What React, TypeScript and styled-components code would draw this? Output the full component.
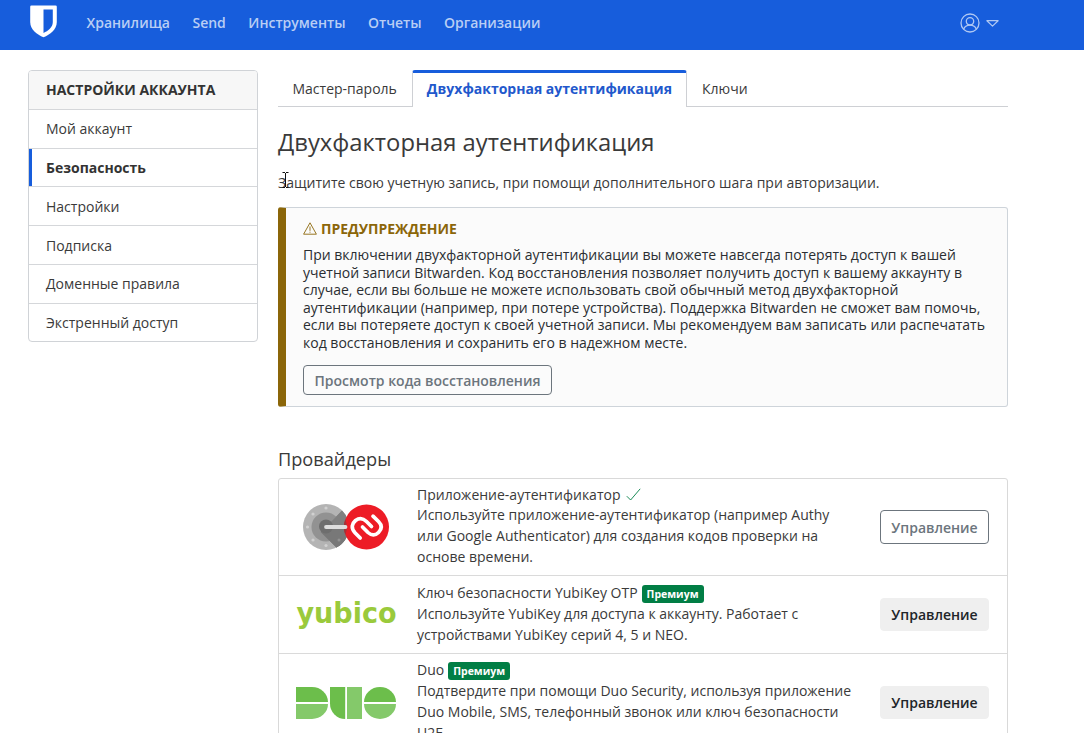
import React from "react";
import styled, { createGlobalStyle, css } from "styled-components";

const GlobalStyle = createGlobalStyle`
  *, *::before, *::after { box-sizing: border-box; }
  html, body { margin: 0; height: 733px; overflow: hidden; background: #fff; }
  body {
    font-family: "Open Sans", "Noto Sans", sans-serif;
    font-size: 14px;
    line-height: 21px;
    color: #3a3a3a;
  }
  h1, h2, h3, p, ul { margin: 0; padding: 0; font-weight: 400; }
  button { font-family: inherit; }
`;

const Navbar = styled.header`
  display: flex;
  align-items: center;
  height: 50px;
  padding: 0 85px 5px 30px;
  background: #175ddc;
`;

const Shield = styled.svg`
  display: block;
  width: 27px;
  height: 33px;
  margin-top: -2px;
`;

const Nav = styled.nav`
  display: flex;
  gap: 22.5px;
  margin-left: 29.5px;
  flex: 1;
`;

const NavLink = styled.a`
  color: #b9cef4;
  font-weight: 600;
  white-space: nowrap;
`;

const AccountMenu = styled.div`
  display: flex;
  align-items: center;
  gap: 6px;
  color: #b0c8f3;

  svg { display: block; }
`;

const Page = styled.div`
  display: flex;
  align-items: flex-start;
  gap: 20px;
  width: 980px;
  margin: 20px 0 0 28px;
`;

const Sidebar = styled.ul`
  width: 230px;
  flex: none;
  list-style: none;
  border: 1px solid #d0d3d7;
  border-radius: 4px;
  overflow: hidden;
`;

const SideItem = styled.li<{ $kind?: "header" | "active" }>`
  display: flex;
  align-items: center;
  height: 38.8px;
  padding: 0 17px;
  border-bottom: 1px solid #d5d7da;
  white-space: nowrap;

  &:last-child { border-bottom: 0; height: 37.2px; }

  ${({ $kind }) => $kind === "header" && css`
    background: #f7f7f7;
    color: #333;
    font-weight: 700;
  `}
  ${({ $kind }) => $kind === "active" && css`
    color: #333;
    font-weight: 700;
    box-shadow: inset 3px 0 0 #175ddc;
  `}
`;

const Content = styled.main`
  width: 730px;
  flex: none;
`;

const Tabs = styled.div`
  display: flex;
  height: 37px;
  border-bottom: 1px solid #ced0d4;
`;

const Tab = styled.a<{ $active?: boolean }>`
  height: 37px;
  padding: 8px 15px 0 14.5px;
  white-space: nowrap;

  &:last-child { padding-left: 15.5px; }

  ${({ $active }) => $active && css`
    padding: 5px 13.5px 0 14px;
    color: #2258cc;
    font-weight: 700;
    background: #fff;
    border: 1px solid #ced0d4;
    border-top: 3px solid #175ddc;
    border-bottom: 0;
    border-radius: 3px 3px 0 0;
  `}
`;

const Title = styled.h1`
  margin-top: 20px;
  font-size: 23.8px;
  line-height: 30px;
  white-space: nowrap;
`;

const Lead = styled.p`
  position: relative;
  margin-top: 15px;
`;

const TextCursor = styled.svg`
  position: absolute;
  left: 4px;
  top: 0;
`;

const Callout = styled.section`
  height: 200px;
  margin-top: 14px;
  padding: 10px 16px 0 17px;
  background: #fbfbfb;
  border: 1px solid #ced4da;
  border-left: 8px solid #8b6609;
  border-radius: 3px;
  color: #2a2e32;
`;

const CalloutTitle = styled.h3`
  display: flex;
  align-items: center;
  gap: 4px;
  color: #8b6609;
  font-size: 14px;
  line-height: 21px;
  font-weight: 700;
`;

const CalloutText = styled.p`
  margin-top: 7px;
  line-height: 17.5px;
  white-space: nowrap;
`;

const Button = styled.button<{ $variant: "outline" | "solid"; $small?: boolean }>`
  display: block;
  height: ${({ $small }) => ($small ? 30 : 34)}px;
  padding: 2px 10px 0;
  font-size: 14px;
  line-height: 20px;
  font-weight: 600;
  white-space: nowrap;
  border-radius: 4px;
  border: 1px solid #6c757d;
  background: transparent;
  color: #6c757d;

  ${({ $variant }) => $variant === "solid" && css`
    height: 33px;
    padding-top: 0;
    background: #efefef;
    border-color: #efefef;
    color: #212529;
  `}
`;

const RecoveryButton = styled(Button)`
  width: 249px;
  margin-top: 14px;
`;

const SectionTitle = styled.h2`
  margin-top: 39px;
  font-size: 18.2px;
  line-height: 26px;
`;

const Providers = styled.ul`
  margin-top: 6px;
  list-style: none;
  border: 1px solid #d9d9d9;
  border-radius: 3px 3px 0 0;
`;

const Provider = styled.li<{ $height: number }>`
  display: flex;
  height: ${({ $height }) => $height}px;
  padding: 0 18px 0 17px;
  border-bottom: 1px solid #dadada;
`;

const Logo = styled.div`
  display: flex;
  align-items: center;
  width: 121px;
  flex: none;
  svg { display: block; }
`;

const Info = styled.div<{ $top?: number }>`
  flex: 1;
  padding-top: ${({ $top = 6 }) => $top}px;
`;

const ProviderName = styled.h3<{ $badge?: boolean }>`
  display: flex;
  align-items: center;
  gap: ${({ $badge }) => ($badge ? 4 : 5.5)}px;
  height: ${({ $badge }) => ($badge ? 20.5 : 18.5)}px;
  font-size: 14px;
  line-height: 21px;
`;

const Badge = styled.span`
  height: 18px;
  margin-top: 4px;
  padding: 0 5px;
  border-radius: 3px;
  background: #017e45;
  color: #fff;
  font-size: 10.5px;
  line-height: 18px;
  font-weight: 700;
`;

const Description = styled.p`
  white-space: nowrap;
`;

const Action = styled.div`
  display: flex;
  align-items: center;
  width: 109px;
  button { width: 109px; }
`;

const AuthenticatorLogo = () => (
  <svg width="100" height="50" viewBox="296 502 100 50">
    <circle cx="326" cy="527" r="23" fill="#b4b4b4" />
    <path d="M342 510.5 A23 23 0 0 1 336.5 547.5 L322 533 L334 519 Z" fill="#808080" />
    <circle cx="326" cy="527" r="14.5" fill="#929292" />
    <path d="M326 527 L341.8 511 A23 23 0 0 1 336.5 547.5 L320.8 532 Z" fill="#808080" />
    <path d="M326 527 H349 A23 23 0 0 1 336.5 547.5 L320.8 532 Z" fill="#787878" />
    <circle cx="326" cy="526.5" r="7" fill="#6e6e6e" />
    <circle cx="366.5" cy="527" r="22.5" fill="#ed1c26" />
    <path d="M345.3 519 A23 23 0 0 1 345.3 535 A23 23 0 0 1 345.3 519" fill="#a33338" />
    <path d="M326 527 H345.5" stroke="#dedede" strokeWidth="3.8" strokeLinecap="round" />
    <g fill="#d1d1d1">
      <circle cx="326" cy="508" r="1.6" />
      <circle cx="313" cy="514" r="1.6" />
      <circle cx="307.5" cy="527" r="1.6" />
      <circle cx="313" cy="540" r="1.6" />
      <circle cx="326" cy="545.5" r="1.6" />
    </g>
    <circle cx="339" cy="540" r="1.5" fill="#929292" />
    <path
      d="M360.2 538 L355.2 533 C350.5 528 352 523.5 355.5 520.5 C359.5 517.5 363.5 518.5 366.5 521.5 L371.5 526.5 M362.5 527 L368 532.5 C371.5 535.7 375.5 535.5 378.5 532.5 C382 529 382 525 378.5 521.5 L373 516.2"
      fill="none"
      stroke="#fff"
      strokeWidth="3.7"
      strokeLinecap="round"
      strokeLinejoin="round"
    />
  </svg>
);

const YubicoLogo = () => (
  <svg width="102" height="36" viewBox="296 597 102 36">
    <text
      x="296.5"
      y="622.5"
      fill="#9aca3c"
      fontFamily="'DejaVu Sans', sans-serif"
      fontWeight="700"
      fontSize="27.5"
      textLength="100"
      lengthAdjust="spacingAndGlyphs"
    >
      yubico
    </text>
  </svg>
);

const DuoLogo = () => (
  <svg width="100" height="32" viewBox="0 0 100 32">
    <g fill="#6cbe4b">
      <path d="M0 0H16A16 15 0 0 1 32 15H0Z" />
      <path d="M34 0H49.2V32A15.2 15.5 0 0 1 34 16.5Z" />
      <path d="M68 15A16 15 0 0 1 100 15Z" />
    </g>
    <g fill="#84c96a">
      <path d="M0 17H32A16 15 0 0 1 16 32H0Z" />
      <path d="M51 0H66V32H51Z" />
      <path d="M68 17H100A16 15 0 0 1 68 17Z" />
    </g>
  </svg>
);

const sections = ["Настройки", "Подписка", "Доменные правила", "Экстренный доступ"];

export default function App() {
  return (
    <>
      <GlobalStyle />
      <Navbar>
        <Shield viewBox="0 0 27 33">
          <path d="M1.5 0.5H25.5Q26.8 0.5 26.8 1.8V17C26.8 25 20 29.5 13.5 32.3C7 29.5 0.2 25 0.2 17V1.8Q0.2 0.5 1.5 0.5Z" fill="#fff" />
          <path d="M13.5 4.5H22.8V17C22.8 22.5 18 25.8 13.5 28Z" fill="#175ddc" />
        </Shield>
        <Nav>
          <NavLink>Хранилища</NavLink>
          <NavLink>Send</NavLink>
          <NavLink>Инструменты</NavLink>
          <NavLink>Отчеты</NavLink>
          <NavLink>Организации</NavLink>
        </Nav>
        <AccountMenu>
          <svg width="20" height="20" viewBox="0 0 20 20" fill="none" stroke="currentColor" strokeWidth="1.3">
            <circle cx="10" cy="10" r="9" />
            <circle cx="10" cy="8.3" r="3.7" />
            <path d="M3.7 16.3C4.6 13.5 7 12.2 10 12.2S15.4 13.5 16.3 16.3" />
          </svg>
          <svg width="13" height="8" viewBox="0 0 13 8" fill="none" stroke="currentColor" strokeWidth="1.2" strokeLinejoin="round">
            <path d="M0.9 1.7H12.1L6.5 7.1Z" />
          </svg>
        </AccountMenu>
      </Navbar>
      <Page>
        <Sidebar>
          <SideItem $kind="header">НАСТРОЙКИ АККАУНТА</SideItem>
          <SideItem>Мой аккаунт</SideItem>
          <SideItem $kind="active">Безопасность</SideItem>
          {sections.map((name) => (
            <SideItem key={name}>{name}</SideItem>
          ))}
        </Sidebar>
        <Content>
          <Tabs>
            <Tab>Мастер-пароль</Tab>
            <Tab $active>Двухфакторная аутентификация</Tab>
            <Tab>Ключи</Tab>
          </Tabs>
          <Title>Двухфакторная аутентификация</Title>
          <Lead>
            Защитите свою учетную запись, при помощи дополнительного шага при авторизации.
            <TextCursor width="8" height="16" viewBox="0 0 8 16" fill="none" stroke="#111">
              <path d="M0.5 0.5H3M4 0.5H6.5M3.5 1V15M0.5 15.5H3M4 15.5H6.5" />
            </TextCursor>
          </Lead>
          <Callout>
            <CalloutTitle>
              <svg width="14" height="13" viewBox="0 0 14 13" fill="none" stroke="currentColor" strokeWidth="0.9" strokeLinejoin="round">
                <path d="M7 0.8L13.4 12.2H0.6ZM7 4.5V8.8M7 9.7V10.7" />
              </svg>
              ПРЕДУПРЕЖДЕНИЕ
            </CalloutTitle>
            <CalloutText>
              При включении двухфакторной аутентификации вы можете навсегда потерять доступ к вашей<br />
              учетной записи Bitwarden. Код восстановления позволяет получить доступ к вашему аккаунту в<br />
              случае, если вы больше не можете использовать свой обычный метод двухфакторной<br />
              аутентификации (например, при потере устройства). Поддержка Bitwarden не сможет вам помочь,<br />
              если вы потеряете доступ к своей учетной записи. Мы рекомендуем вам записать или распечатать<br />
              код восстановления и сохранить его в надежном месте.
            </CalloutText>
            <RecoveryButton $variant="outline" $small>Просмотр кода восстановления</RecoveryButton>
          </Callout>
          <SectionTitle>Провайдеры</SectionTitle>
          <Providers>
            <Provider $height={97}>
              <Logo><AuthenticatorLogo /></Logo>
              <Info>
                <ProviderName>
                  Приложение-аутентификатор
                  <svg width="15" height="13" viewBox="0 0 15 13" fill="none" stroke="#017e45" strokeWidth="0.9">
                    <path d="M0.8 8.2L4.6 12L14.2 0.8" />
                  </svg>
                </ProviderName>
                <Description>
                  Используйте приложение-аутентификатор (например Authy<br />
                  или Google Authenticator) для создания кодов проверки на<br />
                  основе времени.
                </Description>
              </Info>
              <Action><Button $variant="outline">Управление</Button></Action>
            </Provider>
            <Provider $height={78}>
              <Logo><YubicoLogo /></Logo>
              <Info>
                <ProviderName $badge>Ключ безопасности YubiKey OTP<Badge>Премиум</Badge></ProviderName>
                <Description>
                  Используйте YubiKey для доступа к аккаунту. Работает с<br />
                  устройствами YubiKey серий 4, 5 и NEO.
                </Description>
              </Info>
              <Action><Button $variant="solid">Управление</Button></Action>
            </Provider>
            <Provider $height={98}>
              <Logo><DuoLogo /></Logo>
              <Info $top={5}>
                <ProviderName $badge>Duo<Badge>Премиум</Badge></ProviderName>
                <Description>
                  Подтвердите при помощи Duo Security, используя приложение<br />
                  Duo Mobile, SMS, телефонный звонок или ключ безопасности<br />
                  U2F.
                </Description>
              </Info>
              <Action><Button $variant="solid">Управление</Button></Action>
            </Provider>
          </Providers>
        </Content>
      </Page>
    </>
  );
}
